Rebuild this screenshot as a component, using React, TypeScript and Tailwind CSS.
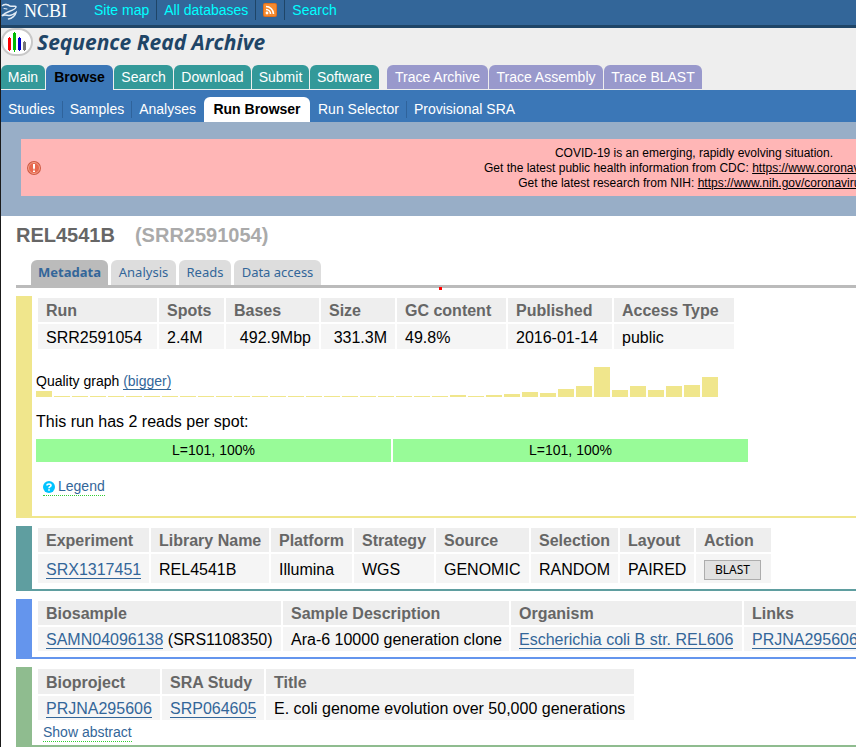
import React from "react";

type Tab = { label: string; width: string; active?: boolean };
type Column = { head: string; width: string; cell: React.ReactNode; right?: boolean };

const mainTabs: Tab[] = [
  { label: "Main", width: "w-11" },
  { label: "Browse", width: "w-[67px]", active: true },
  { label: "Search", width: "w-[59px]" },
  { label: "Download", width: "w-[77px]" },
  { label: "Submit", width: "w-[57px]" },
  { label: "Software", width: "w-[69px]" },
];

const traceTabs: Tab[] = [
  { label: "Trace Archive", width: "w-[101px]" },
  { label: "Trace Assembly", width: "w-[114px]" },
  { label: "Trace BLAST", width: "w-[98px]" },
];

const pageTabs: Tab[] = [
  { label: "Metadata", width: "w-[77px]", active: true },
  { label: "Analysis", width: "w-[65px]" },
  { label: "Reads", width: "w-[52px]" },
  { label: "Data access", width: "w-[87px]" },
];

const quality = [
  6, 1, 1, 1, 1, 1, 1, 1, 1, 1, 1, 1, 1, 1, 1, 1, 1, 1, 1, 1, 1, 1, 1, 2, 1, 2, 3, 5, 4, 8, 11, 30, 7, 11, 7, 11, 12, 20,
];

function TextLink({ children }: { children: React.ReactNode }) {
  return (
    <a href="#" className="border-b border-[#336699] text-[#336699]">
      {children}
    </a>
  );
}

const runColumns: Column[] = [
  { head: "Run", width: "w-[119px]", cell: "SRR2591054" },
  { head: "Spots", width: "w-[65px]", cell: "2.4M" },
  { head: "Bases", width: "w-[93px]", cell: "492.9Mbp", right: true },
  { head: "Size", width: "w-[74px]", cell: "331.3M", right: true },
  { head: "GC content", width: "w-[109px]", cell: "49.8%" },
  { head: "Published", width: "w-[104px]", cell: "2016-01-14" },
  { head: "Access Type", width: "w-[120px]", cell: "public" },
];

const experimentColumns: Column[] = [
  { head: "Experiment", width: "w-[111px]", cell: <TextLink>SRX1317451</TextLink> },
  { head: "Library Name", width: "w-[118px]", cell: "REL4541B" },
  { head: "Platform", width: "w-[81px]", cell: "Illumina" },
  { head: "Strategy", width: "w-[80px]", cell: "WGS" },
  { head: "Source", width: "w-[93px]", cell: "GENOMIC" },
  { head: "Selection", width: "w-[87px]", cell: "RANDOM" },
  { head: "Layout", width: "w-[74px]", cell: "PAIRED" },
  {
    head: "Action",
    width: "w-[75px]",
    cell: (
      <button
        type="button"
        className="block h-5 w-[57px] border border-[#adadad] bg-[#e1e1e1] text-center font-['Noto_Sans',sans-serif] text-xs leading-[18px]"
      >
        BLAST
      </button>
    ),
  },
];

const sampleColumns: Column[] = [
  {
    head: "Biosample",
    width: "w-[243px]",
    cell: (
      <>
        <TextLink>SAMN04096138</TextLink> (SRS1108350)
      </>
    ),
  },
  { head: "Sample Description", width: "w-[226px]", cell: "Ara-6 10000 generation clone" },
  { head: "Organism", width: "w-[231px]", cell: <TextLink>Escherichia coli B str. REL606</TextLink> },
  { head: "Links", width: "w-[122px]", cell: <TextLink>PRJNA295606</TextLink> },
];

const projectColumns: Column[] = [
  { head: "Bioproject", width: "w-[122px]", cell: <TextLink>PRJNA295606</TextLink> },
  { head: "SRA Study", width: "w-[102px]", cell: <TextLink>SRP064605</TextLink> },
  { head: "Title", width: "w-[368px]", cell: "E. coli genome evolution over 50,000 generations" },
];

function DataTable({ columns, headRow = "h-6", bodyRow = "h-6" }: { columns: Column[]; headRow?: string; bodyRow?: string }) {
  return (
    <table className="table-fixed w-px border-separate border-spacing-0.5 whitespace-nowrap text-base leading-5">
      <thead>
        <tr className={headRow}>
          {columns.map((c) => (
            <th key={c.head} scope="col" className={`${c.width} bg-[#eeeeee] px-2 pt-0.5 text-left font-bold text-[#666666]`}>
              {c.head}
            </th>
          ))}
        </tr>
      </thead>
      <tbody>
        <tr className={bodyRow}>
          {columns.map((c) => (
            <td key={c.head} className={`bg-[#f5f5f5] px-2 pt-0.5 ${c.right ? "text-right" : "text-left"}`}>
              {c.cell}
            </td>
          ))}
        </tr>
      </tbody>
    </table>
  );
}

function Panel({ color, children }: { color: string; children: React.ReactNode }) {
  return <section className={`overflow-hidden border-b-2 border-l-16 pl-1 ${color}`}>{children}</section>;
}

function Divider() {
  return <span className="h-5 w-px bg-[#1f4567]" />;
}

function SubDivider() {
  return <span className="mx-[7px] h-[17px] w-px bg-[#2f639b]" />;
}

function NcbiMark() {
  return (
    <svg width="17" height="20" viewBox="0 0 17 20" fill="none" stroke="#e3ecf5" strokeLinecap="round">
      <path d="M1.500 4.500C4 2.500 7 4 9 5C11.500 6 14.500 4.500 15 5.500C15.500 8 11 9.500 8 10.500C5 11.500 3 12.500 1.500 14.500" strokeWidth="1.500" />
      <path d="M1.500 14.500C4 13 6 14.500 8.500 14.500C11 14.500 13 13 15 11.500C14.500 14.500 11 17.500 7.500 18" strokeWidth="1.500" />
      <path d="M3 7.500L6 8M3 3.800C5 2.600 7 3.400 8 4.400" strokeWidth="1" />
    </svg>
  );
}

function RssIcon() {
  return (
    <svg width="14" height="14" viewBox="0 0 14 14" aria-label="RSS">
      <rect width="14" height="14" rx="2" fill="#e2701c" />
      <rect x="1" y="1" width="12" height="12" rx="1" fill="#f58a2e" />
      <circle cx="4" cy="10" r="1.400" fill="#fff" />
      <path d="M3 6.500a4.500 4.500 0 0 1 4.500 4.500M3 3.500A7.500 7.500 0 0 1 10.500 11" fill="none" stroke="#fff" strokeWidth="1.600" />
    </svg>
  );
}

function SraLogo() {
  return (
    <svg width="32" height="28" viewBox="0 0 32 28">
      <rect x="1" y="1" width="30" height="26" rx="13" fill="#fff" stroke="#c8c8c8" strokeWidth="2" />
      <path d="M7 10h3v12h-3zM8 9h1v14h-1z" fill="#f00" />
      <path d="M12 5h3v17h-3zM13 4h1v20h-1z" fill="#00bb00" />
      <path d="M17 10h3v12h-3zM18 9h1v14h-1z" fill="#0000cc" />
      <path d="M22 14h3v8h-3zM23 13h1v10h-1z" fill="#777" />
    </svg>
  );
}

function AlertIcon() {
  return (
    <svg width="14" height="14" viewBox="0 0 14 14" className="shrink-0" aria-label="Alert">
      <circle cx="7" cy="7" r="7" fill="#cf5a42" />
      <circle cx="7" cy="7" r="5.500" fill="#e8694f" stroke="#f2a08c" />
      <path d="M6 3h2v3.500l-.5 2h-1l-.5-2zM6 9.500h2v1.500h-2z" fill="#fff" />
    </svg>
  );
}

function HelpIcon() {
  return (
    <svg width="12" height="12" viewBox="0 0 12 12" aria-hidden="true">
      <circle cx="6" cy="6" r="6" fill="#00c3ff" />
      <path d="M4 4.500C4 2.500 8 2.500 8 4.500C8 5.700 6 5.600 6 7.200" fill="none" stroke="#fff" strokeWidth="1.600" />
      <path d="M6 8.200v1.600" stroke="#fff" strokeWidth="1.700" />
    </svg>
  );
}

export default function App() {
  return (
    <div className="min-h-screen overflow-hidden border-l border-[#1a1a1a] bg-white font-['Liberation_Sans',Arial,sans-serif] text-sm text-black">
      <header>
        <div className="flex h-7 items-start border-b-3 border-[#1f4567] bg-[#336699] text-[#00ffff]">
          <a href="#" className="flex w-[93px] items-center gap-[6px] text-white">
            <NcbiMark />
            <span className="font-['Liberation_Serif',serif] text-lg leading-[22px]">NCBI</span>
          </a>
          <nav className="flex items-center gap-[7px] leading-5">
            <a href="#">Site map</a>
            <Divider />
            <a href="#">All databases</a>
            <Divider />
            <a href="#"><RssIcon /></a>
            <Divider />
            <a href="#">Search</a>
          </nav>
        </div>

        <div className="bg-[#eeeeee]">
          <h1 className="flex h-[37px] items-start gap-1 text-[#1f4567]">
            <SraLogo />
            <span className="font-['Open_Sans',sans-serif] text-[21px] leading-7 font-bold italic">Sequence Read Archive</span>
          </h1>
          <nav className="flex gap-2 text-white">
            <div className="flex gap-px">
              {mainTabs.map((t) =>
                t.active ? (
                  <a key={t.label} href="#" className={`${t.width} h-[25px] rounded-t-md bg-[#3b77b7] text-center leading-6 font-bold text-black`}>
                    {t.label}
                  </a>
                ) : (
                  <a key={t.label} href="#" className={`${t.width} h-6 rounded-t-md bg-[#339999] text-center leading-6`}>
                    {t.label}
                  </a>
                ),
              )}
            </div>
            <div className="flex gap-px">
              {traceTabs.map((t) => (
                <a key={t.label} href="#" className={`${t.width} h-6 rounded-t-md bg-[#9999cc] text-center leading-6 whitespace-nowrap`}>
                  {t.label}
                </a>
              ))}
            </div>
          </nav>
        </div>

        <nav className="flex h-8 items-end bg-[#3b77b7] pl-[7px] leading-[25px] whitespace-nowrap text-white">
          <div className="flex h-[25px] items-center">
            <a href="#">Studies</a>
            <SubDivider />
            <a href="#">Samples</a>
            <SubDivider />
            <a href="#">Analyses</a>
            <a href="#" className="mx-2 w-[106px] rounded-t-md bg-white text-center font-bold text-black">Run Browser</a>
            <a href="#">Run Selector</a>
            <SubDivider />
            <a href="#">Provisional SRA</a>
          </div>
        </nav>
      </header>

      <div className="bg-[#98aec7] pt-[17px] pb-5 pl-5">
        <div className="flex h-[57px] items-center bg-[#ffb6b6] pl-1.5 text-xs leading-[15px] whitespace-nowrap">
          <AlertIcon />
          <p className="ml-[443px] shrink-0 pt-0.5 text-center">
            COVID-19 is an emerging, rapidly evolving situation.
            <br />
            Get the latest public health information from CDC: <a href="#" className="underline">https://www.coronavirus.gov</a>.
            <br />
            Get the latest research from NIH: <a href="#" className="underline">https://www.nih.gov/coronavirus</a>.
          </p>
        </div>
      </div>

      <main className="pl-[15px]">
        <h2 className="flex h-11 gap-5 text-xl leading-[38px] font-bold text-[#666666]">
          REL4541B <span className="text-[#aaaaaa]">(SRR2591054)</span>
        </h2>

        <nav className="relative flex gap-[3px] border-b-3 border-[#bbbbbb] pl-[15px] font-['Noto_Sans',sans-serif] text-[13px] leading-[25px] whitespace-nowrap text-[#336699]">
          {pageTabs.map((t) => (
            <a
              key={t.label}
              href="#"
              className={`${t.width} rounded-t-md text-center ${t.active ? "bg-[#bbbbbb] font-bold" : "bg-[#dddddd]"}`}
            >
              {t.label}
            </a>
          ))}
          <span className="absolute top-[27px] left-[423px] size-[3px] bg-[#ff0000]" />
        </nav>

        <div className="flex flex-col gap-2 pt-2">
          <Panel color="border-[#f0e68c]">
            <DataTable columns={runColumns} bodyRow="h-[25px]" />
            <div className="mt-4 grid">
              <p className="col-start-1 row-start-1 pt-1 leading-5">
                Quality graph <TextLink>(bigger)</TextLink>
              </p>
              <div className="col-start-1 row-start-1 flex h-[30px] items-end gap-0.5">
                {quality.map((h, i) => (
                  <span key={i} className="w-4 bg-[#f0e68c]" style={{ height: h }} />
                ))}
              </div>
            </div>
            <p className="mt-[15px] text-base leading-5">This run has 2 reads per spot:</p>
            <div className="mt-[7px] flex gap-0.5 text-center leading-[23px]">
              <div className="w-[355px] bg-[#98fb98]">L=101, 100%</div>
              <div className="w-[355px] bg-[#98fb98]">L=101, 100%</div>
            </div>
            <div className="flex pt-4 pb-5 pl-[7px]">
              <button type="button" className="flex items-center gap-[3px] border-b border-dotted border-[#32cd32] leading-[17px] text-[#336699]">
                <HelpIcon />
                Legend
              </button>
            </div>
          </Panel>

          <Panel color="border-[#5f9ea0]">
            <div className="pb-1">
              <DataTable columns={experimentColumns} bodyRow="h-[29px]" />
            </div>
          </Panel>

          <Panel color="border-[#6495ed]">
            <div className="pb-1">
              <DataTable columns={sampleColumns} />
            </div>
          </Panel>

          <Panel color="border-[#8fbc8f]">
            <DataTable columns={projectColumns} headRow="h-[25px]" />
            <div className="flex pt-0.5 pb-[3px] pl-[7px]">
              <button type="button" className="border-b border-dotted border-[#32cd32] leading-[17px] text-[#336699]">
                Show abstract
              </button>
            </div>
          </Panel>
        </div>
      </main>
    </div>
  );
}
